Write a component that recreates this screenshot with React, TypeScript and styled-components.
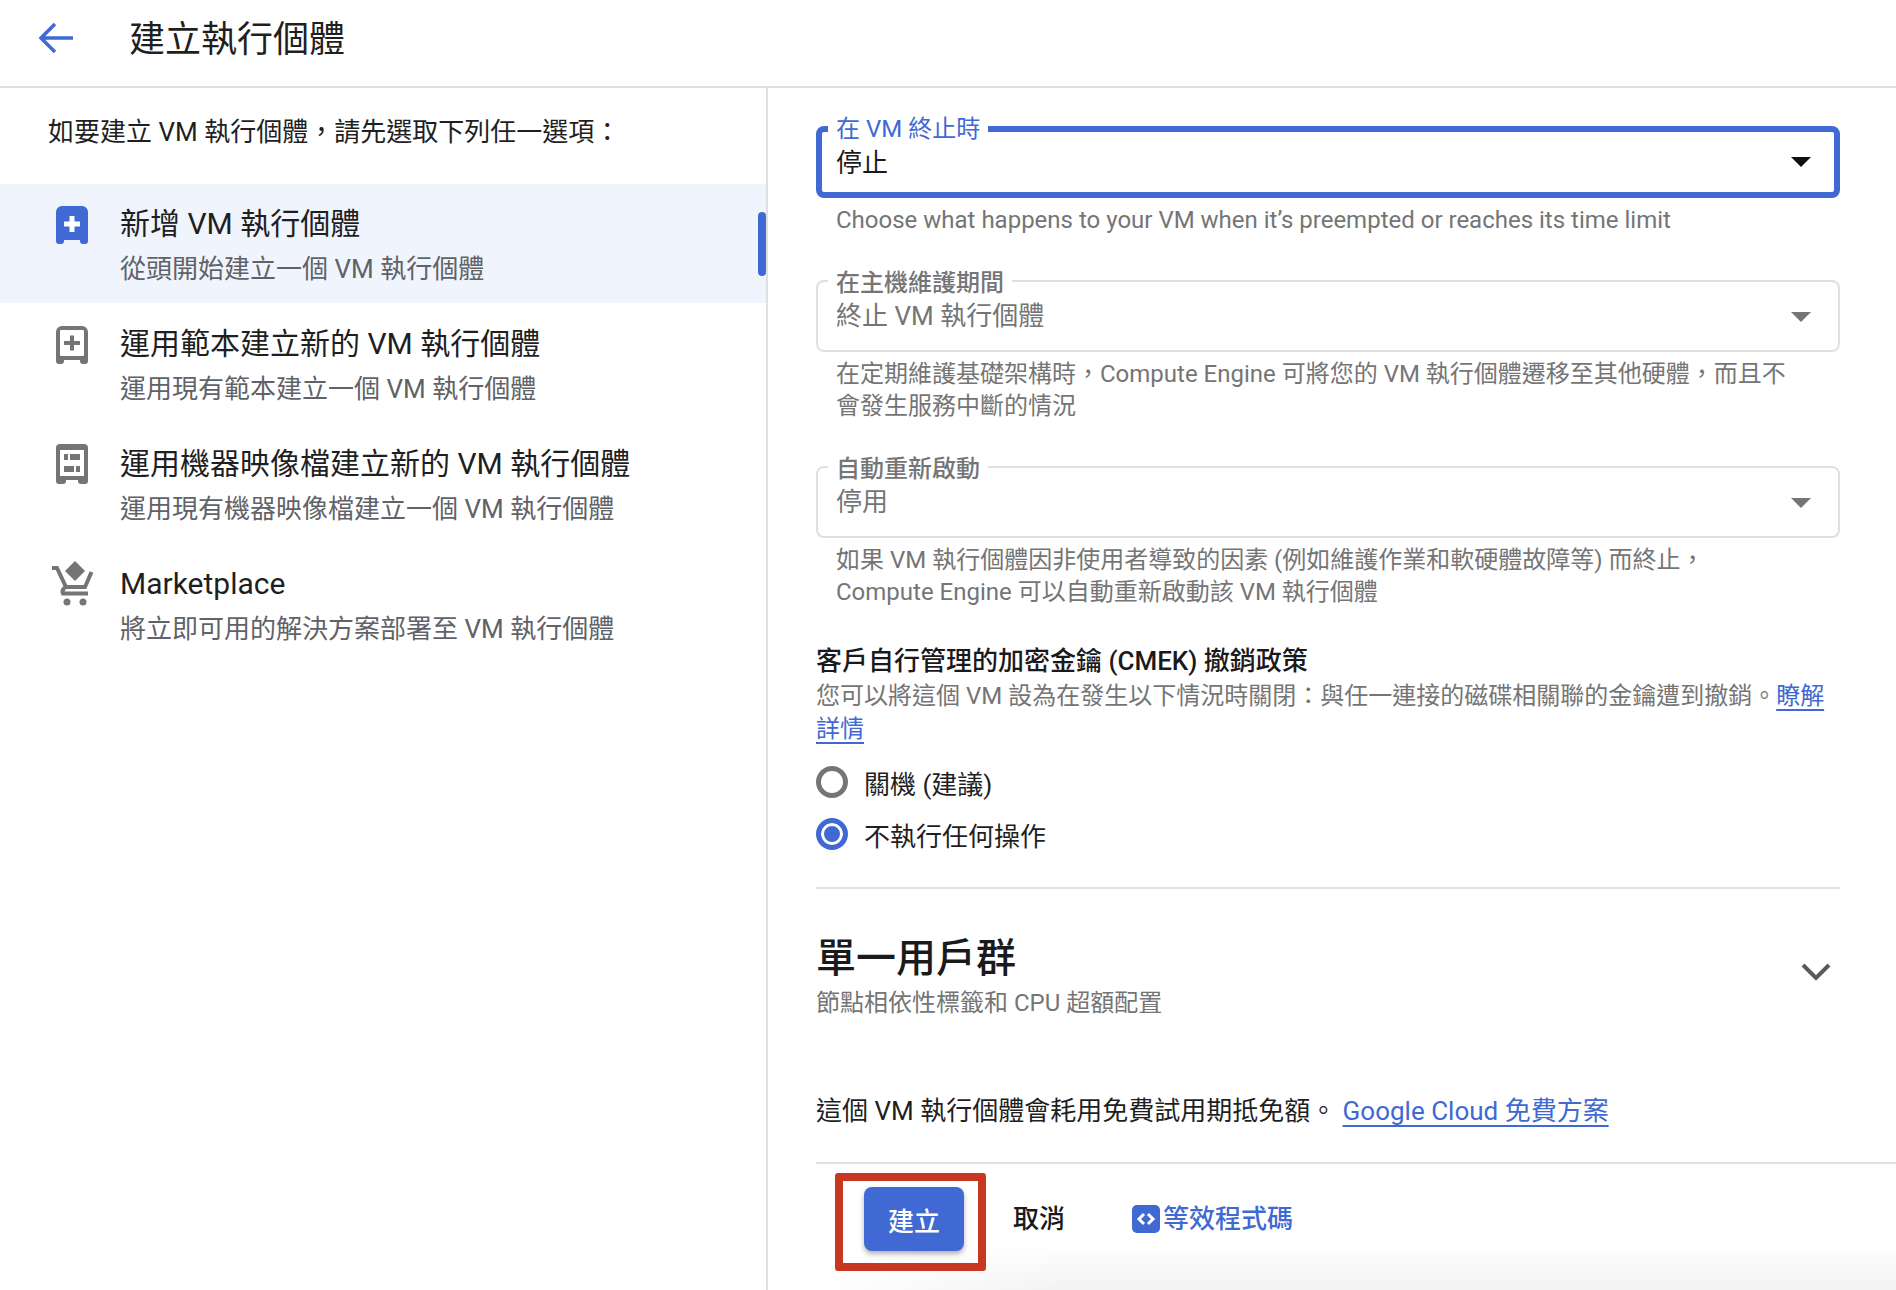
import React from "react";
import styled, { createGlobalStyle } from "styled-components";

const BLUE = "#4069d3";
const GRAY = "#757575";
const HINT = "#5f6368";
const LINE = "#e0e0e0";

const Global = createGlobalStyle`
  html, body { margin: 0; padding: 0; background: #fff; }
  body { font-family: Roboto, "Noto Sans CJK TC", sans-serif; color: #1a1a1a; }
  * { box-sizing: border-box; }
`;

const Page = styled.div`
  width: 1896px;
  height: 1290px;
  overflow: hidden;
  display: flex;
  flex-direction: column;
`;

const Header = styled.header`
  height: 88px;
  flex: none;
  display: flex;
  align-items: center;
  padding: 0 0 10px 36px;
  border-bottom: 2px solid ${LINE};
`;

const BackIcon = styled.svg`
  width: 37px;
  height: 34px;
  flex: none;
`;

const PageTitle = styled.h1`
  margin: 3px 0 0 56px;
  font-size: 36px;
  line-height: 48px;
  font-weight: 400;
  color: #1f1f1f;
`;

const Columns = styled.div`
  flex: 1;
  display: flex;
  min-height: 0;
`;

const Sidebar = styled.aside`
  width: 768px;
  flex: none;
  border-right: 2px solid ${LINE};
  padding-top: 27px;
`;

const Intro = styled.p`
  margin: 0 0 35px;
  padding-left: 48px;
  font-size: 26px;
  line-height: 34px;
  color: #1f1f1f;
`;

const Item = styled.div<{ $active?: boolean }>`
  position: relative;
  height: ${(p) => (p.$active ? 119 : 120)}px;
  display: flex;
  padding: 18px 0 0 52px;
  background: ${(p) => (p.$active ? "#f0f4fd" : "transparent")};
`;

const Indicator = styled.span`
  position: absolute;
  right: 0;
  top: 28px;
  width: 8px;
  height: 64px;
  border-radius: 4px;
  background: ${BLUE};
`;

const IconSlot = styled.svg`
  width: 44px;
  height: 50px;
  flex: none;
`;

const ItemText = styled.div<{ $active?: boolean }>`
  margin-left: 24px;
  padding-top: ${(p) => (p.$active ? 2 : 3)}px;
`;

const ItemTitle = styled.div`
  font-size: 30px;
  line-height: 40px;
  color: #1f1f1f;
`;

const ItemSub = styled.div`
  margin-top: 7px;
  font-size: 26px;
  line-height: 36px;
  color: ${HINT};
`;

const Main = styled.main`
  flex: 1;
  min-width: 0;
  display: flex;
  flex-direction: column;
`;

const Content = styled.div`
  padding: 38px 56px 0 48px;
`;

const Field = styled.div<{ $focused?: boolean }>`
  position: relative;
  height: 72px;
  padding: ${(p) => (p.$focused ? "13px 23px 0 14px" : "16px 27px 0 18px")};
  border: ${(p) => (p.$focused ? `6px solid ${BLUE}` : `2px solid ${LINE}`)};
  border-radius: 8px;
  display: flex;
  justify-content: space-between;
  font-size: 26px;
  line-height: 36px;
  color: ${(p) => (p.$focused ? "#1a1a1a" : GRAY)};
`;

const FieldLabel = styled.label<{ $focused?: boolean }>`
  position: absolute;
  left: ${(p) => (p.$focused ? 6 : 10)}px;
  top: ${(p) => (p.$focused ? -17 : -13)}px;
  padding: 0 8px;
  background: #fff;
  font-size: 24px;
  line-height: 28px;
  font-weight: ${(p) => (p.$focused ? 400 : 500)};
  color: ${(p) => (p.$focused ? BLUE : GRAY)};
`;

const Caret = styled.span<{ $focused?: boolean }>`
  width: 0;
  height: 0;
  margin-top: ${(p) => (p.$focused ? 12 : 14)}px;
  border-left: 10px solid transparent;
  border-right: 10px solid transparent;
  border-top: 10px solid ${(p) => (p.$focused ? "#111" : GRAY)};
`;

const Hint = styled.p<{ $last?: boolean }>`
  margin: 6px 0 ${(p) => (p.$last ? 37 : 44)}px;
  padding: 0 39px 0 20px;
  font-size: 24px;
  line-height: 32px;
  color: ${GRAY};
`;

const PolicyTitle = styled.h3`
  margin: 0 0 3px;
  font-size: 26px;
  line-height: 32px;
  font-weight: 500;
  color: #1a1a1a;
`;

const PolicyText = styled.p`
  margin: 0 0 20px;
  font-size: 24px;
  line-height: 33px;
  color: ${GRAY};
`;

const Link = styled.a`
  color: ${BLUE};
  text-decoration: underline;
  text-decoration-thickness: 2px;
  text-underline-offset: 5px;
`;

const RadioGroup = styled.div`
  display: flex;
  flex-direction: column;
  gap: 20px;
`;

const RadioRow = styled.div`
  display: flex;
  align-items: center;
  height: 32px;
  gap: 16px;
  font-size: 26px;
  color: #1f1f1f;
`;

const RadioDot = styled.span<{ $checked?: boolean }>`
  width: 32px;
  height: 32px;
  flex: none;
  border-radius: 50%;
  border: 5px solid ${(p) => (p.$checked ? BLUE : GRAY)};
  background: ${(p) => (p.$checked ? BLUE : "#fff")};
  box-shadow: ${(p) => (p.$checked ? "inset 0 0 0 3px #fff" : "none")};
`;

const Divider = styled.hr`
  margin: 37px 0 44px;
  border: 0;
  border-top: 2px solid ${LINE};
`;

const SectionHead = styled.div`
  display: flex;
  justify-content: space-between;
`;

const SectionTitle = styled.h2`
  margin: 0;
  font-size: 40px;
  line-height: 52px;
  font-weight: 500;
  color: #1a1a1a;
`;

const SectionSub = styled.div`
  margin-top: 2px;
  font-size: 24px;
  line-height: 32px;
  color: ${GRAY};
`;

const Chevron = styled.svg`
  width: 36px;
  height: 24px;
  flex: none;
  margin: 27px 6px 0 0;
`;

const FreeNote = styled.p`
  margin: 76px 0 35px;
  font-size: 26px;
  line-height: 32px;
  color: #1f1f1f;
`;

const Footer = styled.footer`
  flex: 1;
  margin-left: 48px;
  padding: 9px 0 0 19px;
  border-top: 2px solid ${LINE};
  display: flex;
  align-items: flex-start;
  background:
    linear-gradient(to bottom, #fff 0, #fff 80px, rgba(255, 255, 255, 0) 125px),
    linear-gradient(to right, #fff 0, #f3f3f3 240px);
`;

const Highlight = styled.div`
  width: 151px;
  height: 98px;
  flex: none;
  padding: 6px 14px 12px 21px;
  border: 8px solid #c8371f;
  border-radius: 3px;
`;

const PrimaryButton = styled.button`
  width: 100%;
  height: 100%;
  padding: 0;
  border: 0;
  border-radius: 8px;
  background: ${BLUE};
  color: #fff;
  font: 500 26px Roboto, "Noto Sans CJK TC", sans-serif;
  box-shadow: 0 3px 5px rgba(60, 64, 67, 0.4);
`;

const TextButton = styled.span`
  margin: 27px 0 0 27px;
  font-size: 26px;
  line-height: 38px;
  font-weight: 500;
  color: #1a1a1a;
`;

const CodeLink = styled.span`
  display: flex;
  align-items: center;
  gap: 3px;
  margin: 27px 0 0 67px;
  font-size: 26px;
  line-height: 38px;
  font-weight: 500;
  color: ${BLUE};
`;

const CodeIcon = styled.svg`
  width: 28px;
  height: 28px;
  flex: none;
`;

const NewIcon = () => (
  <IconSlot viewBox="0 0 44 50">
    <g transform="translate(4 4)">
      <path d="M6 0h20a6 6 0 0 1 6 6v29a3 3 0 0 1-3 3h-2a3 3 0 0 1-3-3v-1H8v1a3 3 0 0 1-3 3H3a3 3 0 0 1-3-3V6a6 6 0 0 1 6-6z" fill={BLUE} />
      <path d="M13.5 10h5v5.500H24v5h-5.500V26h-5v-5.500H8v-5h5.500z" fill="#fff" />
    </g>
  </IconSlot>
);

const TemplateIcon = () => (
  <IconSlot viewBox="0 0 44 50">
    <g transform="translate(4 5)">
      <path d="M6 0h20a6 6 0 0 1 6 6v29a3 3 0 0 1-3 3h-2a3 3 0 0 1-3-3v-1H8v1a3 3 0 0 1-3 3H3a3 3 0 0 1-3-3V6a6 6 0 0 1 6-6z" fill={GRAY} />
      <rect x="4" y="4" width="24" height="26" rx="1" fill="#fff" />
      <path d="M14 9.500h4V15h6v4h-6v5.500h-4V19H8v-4h6z" fill={GRAY} />
    </g>
  </IconSlot>
);

const ImageIcon = () => (
  <IconSlot viewBox="0 0 44 50">
    <g transform="translate(4 3)">
      <path d="M4 0h24a4 4 0 0 1 4 4v33a3 3 0 0 1-3 3h-4a3 3 0 0 1-3-3v-1H10v1a3 3 0 0 1-3 3H3a3 3 0 0 1-3-3V4a4 4 0 0 1 4-4z" fill={GRAY} />
      <rect x="4" y="6" width="24" height="26" fill="#fff" />
      <rect x="8" y="10" width="4" height="6" fill={GRAY} />
      <rect x="14" y="10" width="10" height="6" fill={GRAY} />
      <rect x="8" y="22" width="10" height="6" fill={GRAY} />
      <rect x="20" y="22" width="4" height="6" fill={GRAY} />
    </g>
  </IconSlot>
);

const CartIcon = () => (
  <IconSlot viewBox="0 0 44 50">
    <g transform="translate(-12 -6)">
      <path d="M35 6l10 10-10 10-10-10z" fill={GRAY} />
      <path d="M12 13h5l9 19h19l6.500-15" fill="none" stroke={GRAY} strokeWidth="4" />
      <path d="M26 32c-3 1.500-4 4-3 6.500H48" fill="none" stroke={GRAY} strokeWidth="4" />
      <circle cx="27" cy="47" r="3.500" fill={GRAY} />
      <circle cx="43" cy="47" r="3.500" fill={GRAY} />
    </g>
  </IconSlot>
);

const options = [
  { icon: <NewIcon />, title: "新增 VM 執行個體", sub: "從頭開始建立一個 VM 執行個體", active: true },
  { icon: <TemplateIcon />, title: "運用範本建立新的 VM 執行個體", sub: "運用現有範本建立一個 VM 執行個體" },
  { icon: <ImageIcon />, title: "運用機器映像檔建立新的 VM 執行個體", sub: "運用現有機器映像檔建立一個 VM 執行個體" },
  { icon: <CartIcon />, title: "Marketplace", sub: "將立即可用的解決方案部署至 VM 執行個體" },
];

const fields = [
  {
    label: "在 VM 終止時",
    value: "停止",
    focused: true,
    hint: "Choose what happens to your VM when it’s preempted or reaches its time limit",
  },
  {
    label: "在主機維護期間",
    value: "終止 VM 執行個體",
    hint: "在定期維護基礎架構時，Compute Engine 可將您的 VM 執行個體遷移至其他硬體，而且不會發生服務中斷的情況",
  },
  {
    label: "自動重新啟動",
    value: "停用",
    last: true,
    hint: "如果 VM 執行個體因非使用者導致的因素 (例如維護作業和軟硬體故障等) 而終止，Compute Engine 可以自動重新啟動該 VM 執行個體",
  },
];

export default function App() {
  return (
    <Page>
      <Global />
      <Header>
        <BackIcon viewBox="0 0 37 34">
          <path d="M37 17H6M19 3L5 17l14 14" fill="none" stroke={BLUE} strokeWidth="3.500" />
        </BackIcon>
        <PageTitle>建立執行個體</PageTitle>
      </Header>
      <Columns>
        <Sidebar>
          <Intro>如要建立 VM 執行個體，請先選取下列任一選項：</Intro>
          {options.map((o) => (
            <Item key={o.title} $active={o.active}>
              {o.icon}
              <ItemText $active={o.active}>
                <ItemTitle>{o.title}</ItemTitle>
                <ItemSub>{o.sub}</ItemSub>
              </ItemText>
              {o.active && <Indicator />}
            </Item>
          ))}
        </Sidebar>
        <Main>
          <Content>
            {fields.map((f) => (
              <React.Fragment key={f.label}>
                <Field $focused={f.focused}>
                  <FieldLabel $focused={f.focused}>{f.label}</FieldLabel>
                  <span>{f.value}</span>
                  <Caret $focused={f.focused} />
                </Field>
                <Hint $last={f.last}>{f.hint}</Hint>
              </React.Fragment>
            ))}
            <PolicyTitle>客戶自行管理的加密金鑰 (CMEK) 撤銷政策</PolicyTitle>
            <PolicyText>
              您可以將這個 VM 設為在發生以下情況時關閉：與任一連接的磁碟相關聯的金鑰遭到撤銷。<Link>瞭解詳情</Link>
            </PolicyText>
            <RadioGroup>
              <RadioRow>
                <RadioDot />
                關機 (建議)
              </RadioRow>
              <RadioRow>
                <RadioDot $checked />
                不執行任何操作
              </RadioRow>
            </RadioGroup>
            <Divider />
            <SectionHead>
              <div>
                <SectionTitle>單一用戶群</SectionTitle>
                <SectionSub>節點相依性標籤和 CPU 超額配置</SectionSub>
              </div>
              <Chevron viewBox="0 0 36 24">
                <path d="M5 5l13 13L31 5" fill="none" stroke="#5a5a5a" strokeWidth="4" />
              </Chevron>
            </SectionHead>
            <FreeNote>
              這個 VM 執行個體會耗用免費試用期抵免額。 <Link>Google Cloud 免費方案</Link>
            </FreeNote>
          </Content>
          <Footer>
            <Highlight>
              <PrimaryButton>建立</PrimaryButton>
            </Highlight>
            <TextButton>取消</TextButton>
            <CodeLink>
              <CodeIcon viewBox="0 0 28 28">
                <rect width="28" height="28" rx="5" fill={BLUE} />
                <path d="M12 9l-5 5 5 5M16 9l5 5-5 5" fill="none" stroke="#fff" strokeWidth="3" />
              </CodeIcon>
              等效程式碼
            </CodeLink>
          </Footer>
        </Main>
      </Columns>
    </Page>
  );
}
